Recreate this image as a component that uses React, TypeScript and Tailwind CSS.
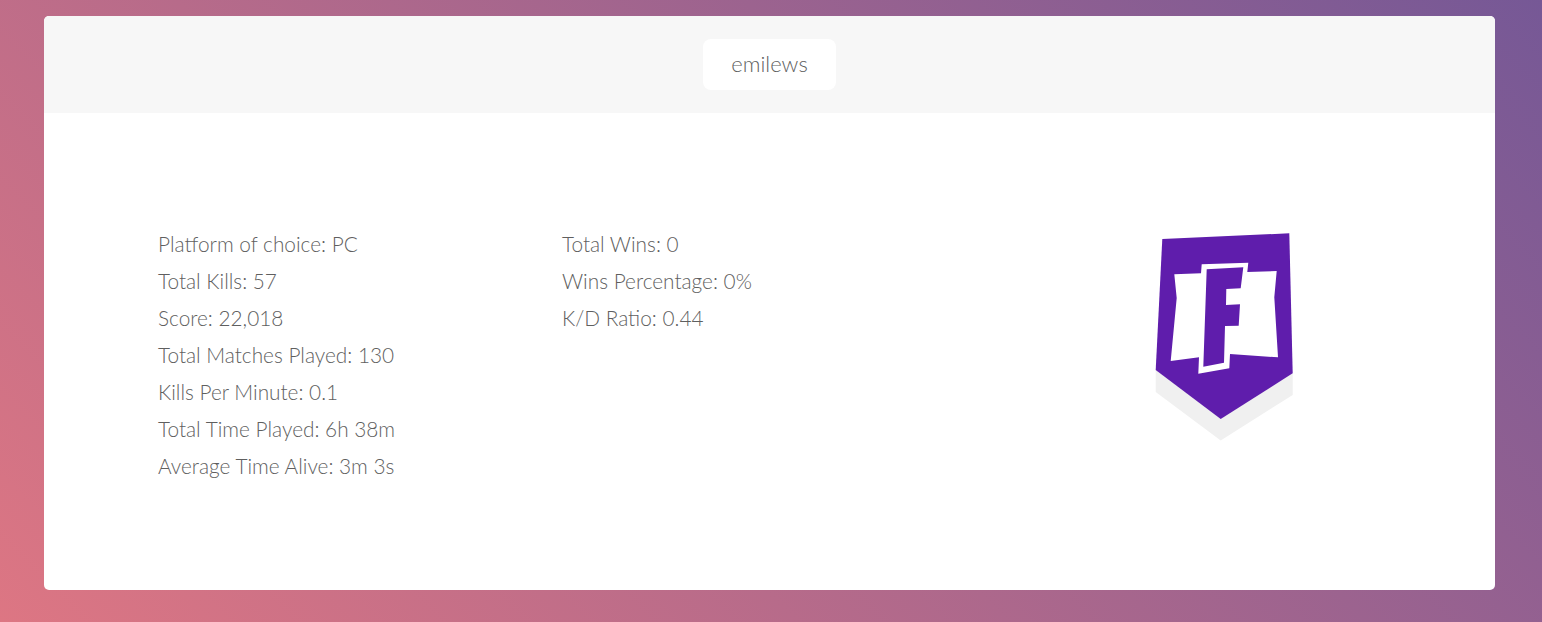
const left = [
  "Platform of choice: PC",
  "Total Kills: 57",
  "Score: 22,018",
  "Total Matches Played: 130",
  "Kills Per Minute: 0.1",
  "Total Time Played: 6h 38m",
  "Average Time Alive: 3m 3s",
];
const right = ["Total Wins: 0", "Wins Percentage: 0%", "K/D Ratio: 0.44"];

function Logo() {
  return (
    <svg viewBox="0 0 190 230" className="w-[190px] h-[230px] shrink-0">
      <polygon points="25.7,150 162.7,153.3 162.7,175 90.7,220.5 25.7,172" fill="#f0f0f0" />
      <polygon points="32.3,19 159.3,13.3 162.7,153.3 90.7,199 25.7,150" fill="#5f1dac" />
      <polygon
        points="44.3,54.3 71,53.3 71.7,44.3 118.3,42.7 117.3,52 146.7,51 144.3,77.3 148,137.3 100,134 99.3,148.3 68.3,153.7 69,137.3 40.7,141 46.7,78"
        fill="#ffffff"
      />
      <polygon
        points="76.7,49.3 113.3,47.3 110.7,68.3 96.3,69 96,85 110,84.3 108.7,105.7 95,106 94,142.7 73.3,146.7"
        fill="#5f1dac"
      />
    </svg>
  );
}

export default function App() {
  return (
    <div className="min-h-[622px] bg-[linear-gradient(45deg,#dd7683,#765896)] px-[44px] pt-4 pb-[32px] font-['Lato','Noto_Sans',sans-serif] font-light text-[#5f5f5f]">
      <div className="h-[574px] w-[1451px] overflow-hidden rounded-[5px] bg-white flex flex-col">
        <div className="h-[97px] bg-[#f7f7f7] flex items-center justify-center">
          <div className="h-[51px] w-[133px] pb-[2px] rounded-lg bg-white flex items-center justify-center text-[22px] text-[#5f5f5f]">
            emilews
          </div>
        </div>
        <div className="flex items-start pl-[114px] pr-[175px]">
          <div className="w-[404px] pt-[112px] text-[20.8px] leading-[37px]">
            {left.map((t) => (
              <div key={t}>{t}</div>
            ))}
          </div>
          <div className="flex-1 pt-[112px] text-[20.8px] leading-[37px]">
            {right.map((t) => (
              <div key={t}>{t}</div>
            ))}
          </div>
          <div className="pt-[107px]">
            <Logo />
          </div>
        </div>
      </div>
    </div>
  );
}
